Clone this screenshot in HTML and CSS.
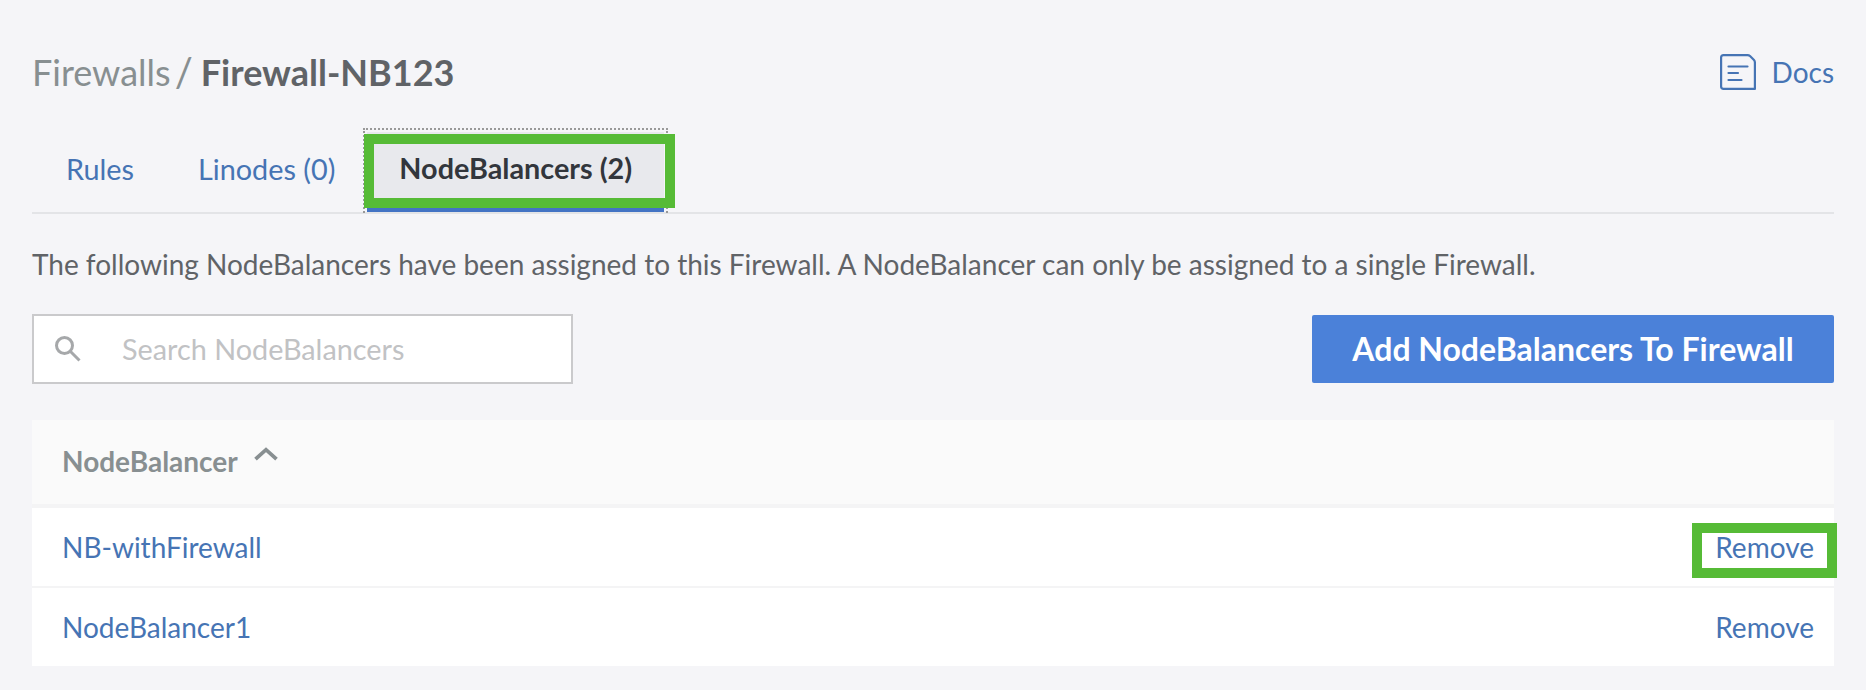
FILE: index.html
```html
<!DOCTYPE html>
<html lang="en">
<head>
<meta charset="utf-8">
<title>Firewall-NB123</title>
<link rel="stylesheet" href="styles.css">
</head>
<body>
<main class="page">
  <header class="header">
    <h1 class="crumbs"><a class="crumb-parent">Firewalls</a><span class="slash">/</span><span class="crumb-current">Firewall-NB123</span></h1>
    <a class="docs">
      <svg class="docs-icon" width="36" height="36" viewBox="0 0 36 36" fill="none" stroke="currentColor" stroke-width="2.200" stroke-linecap="round" stroke-linejoin="round"><path d="M3.500 1.100H27.500Q29 1.100 30 2L34 6Q34.900 7 34.900 8.500V34.900H3.500Q1.100 34.900 1.100 32.500V3.500Q1.100 1.100 3.500 1.100Z"/><path d="M8.500 12.500H27.500M8.500 19H18M8.500 26H21.500"/></svg>
      <span>Docs</span>
    </a>
  </header>
  <nav class="tabs">
    <a class="tab">Rules</a>
    <a class="tab tab-linodes">Linodes (0)</a>
    <a class="tab tab-active">NodeBalancers (2)<span class="mark mark-tab"></span></a>
  </nav>
  <p class="intro">The following NodeBalancers have been assigned to this Firewall. A NodeBalancer can only be assigned to a single Firewall.</p>
  <div class="toolbar">
    <div class="search">
      <svg class="search-icon" width="26" height="26" viewBox="0 0 26 26" fill="none" stroke="currentColor" stroke-width="3"><circle cx="9.500" cy="9.500" r="8"/><path d="M15.500 15.500L24.500 24.500"/></svg>
      <span>Search NodeBalancers</span>
    </div>
    <button class="add" type="button">Add NodeBalancers To Firewall</button>
  </div>
  <section class="table">
    <div class="row head"><span>NodeBalancer</span><svg class="sort" width="24" height="14" viewBox="0 0 24 14" fill="none" stroke="currentColor" stroke-width="3.800"><path d="M1.500 12.200L12 2.700L22.500 12.200"/></svg></div>
    <div class="row"><a>NB-withFirewall</a><a class="remove">Remove<span class="mark mark-remove"></span></a></div>
    <div class="row last"><a>NodeBalancer1</a><a class="remove">Remove</a></div>
  </section>
</main>
</body>
</html>
```
FILE: styles.css
```css
* { box-sizing: border-box; }
body {
  margin: 0;
  background: #f5f5f8;
  color: #606367;
  font: 28px/34px Lato, sans-serif;
  white-space: nowrap;
}
a { color: #4674b4; }
.page { padding: 48px 32px 0; }
.header { display: flex; justify-content: space-between; height: 80px; }
.crumbs { display: flex; margin: 2px 0 0; font-size: 36px; line-height: 44px; font-weight: 400; }
.crumb-parent, .slash { color: #888f91; }
.slash { margin: 0 8px 0 4px; font-size: 40px; }
.crumb-current { font-weight: 700; }
.docs { display: flex; gap: 16px; height: 48px; align-items: center; }
.docs-icon { display: block; }
.tabs {
  display: flex;
  height: 86px;
  border-bottom: 2px solid #e3e4e7;
  font-size: 28.8px;
}
.tab { padding: 24px 30px 0 34px; }
.tab-linodes { padding-right: 32px; }
.tab-active {
  position: relative;
  width: 297px;
  height: 80px;
  margin-top: 4px;
  padding: 19px 0 0 32px;
  background: #e8e9ed;
  border-bottom: 4px solid #4373c4;
  color: #32363c;
  font-weight: 700;
}
.tab-active::before {
  content: "";
  position: absolute;
  inset: -4px -4px -5px;
  border: 2px dotted #999;
  border-bottom: 0;
}
.mark { position: absolute; border: 10px solid #56bb36; }
.mark-tab { left: -3px; top: 2px; width: 311px; height: 74px; }
.intro { margin: 33px 0 33px; }
.toolbar { display: flex; justify-content: space-between; height: 106px; align-items: flex-start; }
.search {
  display: flex;
  width: 541px;
  height: 70px;
  align-items: center;
  padding-left: 21px;
  gap: 41px;
  background: #fff;
  border: 2px solid #cacacc;
  color: #c1c2c4;
  font-size: 28.8px;
}
.search-icon { color: #a6a8aa; }
.add {
  width: 522px;
  height: 68px;
  margin-top: 1px;
  padding: 0;
  border: 0;
  border-radius: 2px;
  background: #4b81d9;
  color: #fff;
  font: 700 32px/38px Lato, sans-serif;
}
.row {
  display: flex;
  height: 80px;
  align-items: center;
  justify-content: space-between;
  padding: 0 20px 0 30px;
  background: #fff;
  border-bottom: 2px solid #f4f4f5;
}
.head {
  height: 88px;
  justify-content: flex-start;
  gap: 16px;
  padding-bottom: 2px;
  background: #fafafa;
  border-bottom-width: 4px;
  color: #888f91;
  font-weight: 700;
}
.sort { margin-top: -14px; }
.last { height: 78px; border: 0; }
.remove { position: relative; }
.mark-remove { left: -23px; top: -7px; width: 145px; height: 55px; }
```
